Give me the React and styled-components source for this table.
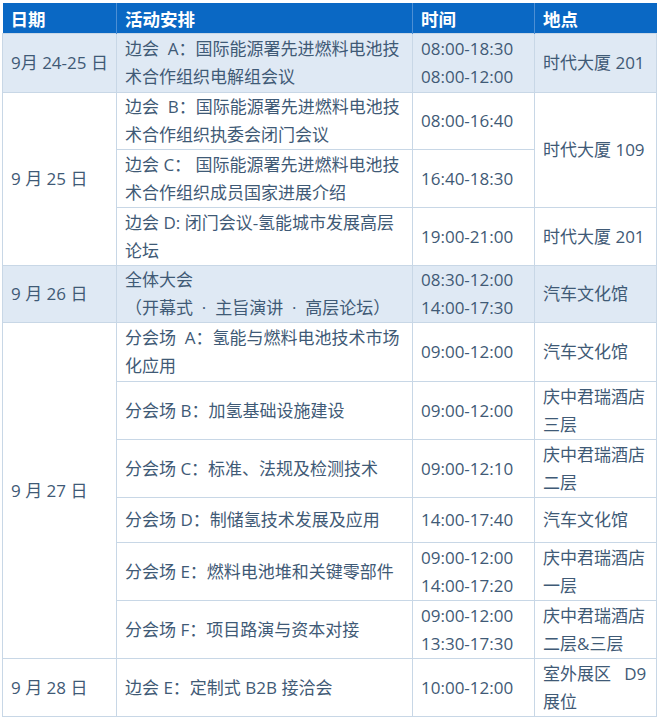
import React from 'react';
import styled, { createGlobalStyle } from 'styled-components';

const GlobalStyle = createGlobalStyle`
  body {
    margin: 0;
    background: #ffffff;
    font-family: "Open Sans", "Noto Sans CJK SC", sans-serif;
  }
`;

const Page = styled.div`
  padding: 3px 4px 0 2px;
`;

const Table = styled.table`
  width: 654px;
  border-collapse: collapse;
  table-layout: fixed;
  font-size: 17px;
  color: #3f5a76;
`;

const HeadCell = styled.th`
  height: 30px;
  padding: 0 8px;
  background: #0a68c4;
  color: #ffffff;
  font-size: 17.5px;
  font-weight: 700;
  text-align: left;
  border-left: 1px solid #4d8fd4;
  &:first-child {
    border-left: none;
  }
`;

const Row = styled.tr`
  height: ${props => props.h}px;
  background: ${props => (props.shaded ? '#dfe9f4' : '#ffffff')};
`;

const Cell = styled.td`
  padding: 0 8px;
  border: 1px solid #c8d7e6;
  vertical-align: middle;
  overflow: hidden;
`;

const Line = styled.div`
  height: 28px;
  line-height: 28px;
  white-space: pre;
`;

const rows = [
  { h: 59, shaded: true, date: '9月 24-25 日', act: ['边会  A：国际能源署先进燃料电池技', '术合作组织电解组会议'], time: ['08:00-18:30', '08:00-12:00'], place: ['时代大厦 201'] },
  { h: 57, date: '9 月 25 日', dateSpan: 3, act: ['边会  B：国际能源署先进燃料电池技', '术合作组织执委会闭门会议'], time: ['08:00-16:40'], place: ['时代大厦 109'], placeSpan: 2 },
  { h: 58, act: ['边会 C： 国际能源署先进燃料电池技', '术合作组织成员国家进展介绍'], time: ['16:40-18:30'] },
  { h: 58, act: ['边会 D: 闭门会议-氢能城市发展高层', '论坛'], time: ['19:00-21:00'], place: ['时代大厦 201'] },
  { h: 57, shaded: true, date: '9 月 26 日', act: ['全体大会', '（开幕式  ·  主旨演讲  ·  高层论坛）'], time: ['08:30-12:00', '14:00-17:30'], place: ['汽车文化馆'] },
  { h: 59, date: '9 月 27 日', dateSpan: 6, act: ['分会场  A：氢能与燃料电池技术市场', '化应用'], time: ['09:00-12:00'], place: ['汽车文化馆'] },
  { h: 58, act: ['分会场 B：加氢基础设施建设'], time: ['09:00-12:00'], place: ['庆中君瑞酒店', '三层'] },
  { h: 58, act: ['分会场 C：标准、法规及检测技术'], time: ['09:00-12:10'], place: ['庆中君瑞酒店', '二层'] },
  { h: 45, act: ['分会场 D：制储氢技术发展及应用'], time: ['14:00-17:40'], place: ['汽车文化馆'] },
  { h: 58, act: ['分会场 E：燃料电池堆和关键零部件'], time: ['09:00-12:00', '14:00-17:20'], place: ['庆中君瑞酒店', '一层'] },
  { h: 58, act: ['分会场 F：项目路演与资本对接'], time: ['09:00-12:00', '13:30-17:30'], place: ['庆中君瑞酒店', '二层&三层'] },
  { h: 58, date: '9 月 28 日', act: ['边会 E：定制式 B2B 接洽会'], time: ['10:00-12:00'], place: ['室外展区   D9', '展位'] },
];

const Lines = ({ items }) =>
  items.map((line, i) => <Line key={i}>{line}</Line>);

export default function App() {
  return (
    <Page>
      <GlobalStyle />
      <Table>
        <colgroup>
          <col style={{ width: 114 }} />
          <col style={{ width: 296 }} />
          <col style={{ width: 122 }} />
          <col style={{ width: 122 }} />
        </colgroup>
        <thead>
          <tr>
            <HeadCell>日期</HeadCell>
            <HeadCell>活动安排</HeadCell>
            <HeadCell>时间</HeadCell>
            <HeadCell>地点</HeadCell>
          </tr>
        </thead>
        <tbody>
          {rows.map((r, i) => (
            <Row key={i} h={r.h} shaded={r.shaded}>
              {r.date && <Cell rowSpan={r.dateSpan || 1}><Line>{r.date}</Line></Cell>}
              <Cell><Lines items={r.act} /></Cell>
              <Cell><Lines items={r.time} /></Cell>
              {r.place && <Cell rowSpan={r.placeSpan || 1}><Lines items={r.place} /></Cell>}
            </Row>
          ))}
        </tbody>
      </Table>
    </Page>
  );
}
